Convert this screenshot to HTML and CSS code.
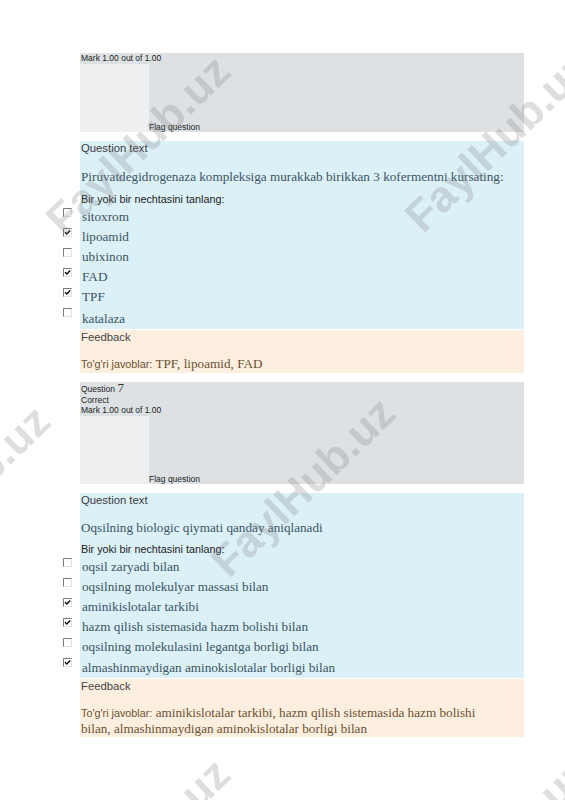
FILE: index.html
```html
<!DOCTYPE html>
<html lang="uz">
<head>
<meta charset="utf-8">
<title>Quiz review</title>
<link rel="stylesheet" href="styles.css">
</head>
<body>
<div class="page">
  <div class="info">
    <div class="info-line">Mark 1.00 out of 1.00</div>
    <div class="flag-row"><div class="flag-col"></div><div class="flag-text">Flag question</div></div>
  </div>

  <div class="qtext">
    <div class="label">Question text</div>
    <p class="question">Piruvatdegidrogenaza kompleksiga murakkab birikkan 3 kofermentni kursating:</p>
    <div class="prompt">Bir yoki bir nechtasini tanlang:</div>
    <div class="options">
      <div class="option"><span class="cb"><svg width="9" height="9" viewBox="0 0 9 9"><rect x="0.5" y="0.5" width="8" height="8" fill="#fff" stroke="#e2e2e2"/><path d="M0.5 8.5V0.5H8.5" fill="none" stroke="#7a7a7a"/></svg></span><span class="opt-label">sitoxrom</span></div>
      <div class="option"><span class="cb"><svg width="9" height="9" viewBox="0 0 9 9"><rect x="0.5" y="0.5" width="8" height="8" fill="#fff" stroke="#e2e2e2"/><path d="M0.5 8.5V0.5H8.5" fill="none" stroke="#7a7a7a"/><path d="M2 4.2l1.8 1.8 3.4-3.6" fill="none" stroke="#111" stroke-width="1.5"/></svg></span><span class="opt-label">lipoamid</span></div>
      <div class="option"><span class="cb"><svg width="9" height="9" viewBox="0 0 9 9"><rect x="0.5" y="0.5" width="8" height="8" fill="#fff" stroke="#e2e2e2"/><path d="M0.5 8.5V0.5H8.5" fill="none" stroke="#7a7a7a"/></svg></span><span class="opt-label">ubixinon</span></div>
      <div class="option"><span class="cb"><svg width="9" height="9" viewBox="0 0 9 9"><rect x="0.5" y="0.5" width="8" height="8" fill="#fff" stroke="#e2e2e2"/><path d="M0.5 8.5V0.5H8.5" fill="none" stroke="#7a7a7a"/><path d="M2 4.2l1.8 1.8 3.4-3.6" fill="none" stroke="#111" stroke-width="1.5"/></svg></span><span class="opt-label">FAD</span></div>
      <div class="option"><span class="cb"><svg width="9" height="9" viewBox="0 0 9 9"><rect x="0.5" y="0.5" width="8" height="8" fill="#fff" stroke="#e2e2e2"/><path d="M0.5 8.5V0.5H8.5" fill="none" stroke="#7a7a7a"/><path d="M2 4.2l1.8 1.8 3.4-3.6" fill="none" stroke="#111" stroke-width="1.5"/></svg></span><span class="opt-label">TPF</span></div>
      <div class="option option-last"><span class="cb"><svg width="9" height="9" viewBox="0 0 9 9"><rect x="0.5" y="0.5" width="8" height="8" fill="#fff" stroke="#e2e2e2"/><path d="M0.5 8.5V0.5H8.5" fill="none" stroke="#7a7a7a"/></svg></span><span class="opt-label">katalaza</span></div>
    </div>
  </div>

  <div class="feedback">
    <div class="label">Feedback</div>
    <p class="answer"><span class="answer-lead">To'g'ri javoblar:</span> TPF, lipoamid, FAD</p>
  </div>

  <div class="info info-second">
    <div class="info-line info-qno">Question <span class="qno-num">7</span></div>
    <div class="info-line">Correct</div>
    <div class="info-line">Mark 1.00 out of 1.00</div>
    <div class="flag-row"><div class="flag-col"></div><div class="flag-text">Flag question</div></div>
  </div>

  <div class="qtext qtext-tight">
    <div class="label">Question text</div>
    <p class="question">Oqsilning biologic qiymati qanday aniqlanadi</p>
    <div class="prompt">Bir yoki bir nechtasini tanlang:</div>
    <div class="options">
      <div class="option"><span class="cb"><svg width="9" height="9" viewBox="0 0 9 9"><rect x="0.5" y="0.5" width="8" height="8" fill="#fff" stroke="#e2e2e2"/><path d="M0.5 8.5V0.5H8.5" fill="none" stroke="#7a7a7a"/></svg></span><span class="opt-label">oqsil zaryadi bilan</span></div>
      <div class="option"><span class="cb"><svg width="9" height="9" viewBox="0 0 9 9"><rect x="0.5" y="0.5" width="8" height="8" fill="#fff" stroke="#e2e2e2"/><path d="M0.5 8.5V0.5H8.5" fill="none" stroke="#7a7a7a"/></svg></span><span class="opt-label">oqsilning molekulyar massasi bilan</span></div>
      <div class="option"><span class="cb"><svg width="9" height="9" viewBox="0 0 9 9"><rect x="0.5" y="0.5" width="8" height="8" fill="#fff" stroke="#e2e2e2"/><path d="M0.5 8.5V0.5H8.5" fill="none" stroke="#7a7a7a"/><path d="M2 4.2l1.8 1.8 3.4-3.6" fill="none" stroke="#111" stroke-width="1.5"/></svg></span><span class="opt-label">aminikislotalar tarkibi</span></div>
      <div class="option"><span class="cb"><svg width="9" height="9" viewBox="0 0 9 9"><rect x="0.5" y="0.5" width="8" height="8" fill="#fff" stroke="#e2e2e2"/><path d="M0.5 8.5V0.5H8.5" fill="none" stroke="#7a7a7a"/><path d="M2 4.2l1.8 1.8 3.4-3.6" fill="none" stroke="#111" stroke-width="1.5"/></svg></span><span class="opt-label">hazm qilish sistemasida hazm bolishi bilan</span></div>
      <div class="option"><span class="cb"><svg width="9" height="9" viewBox="0 0 9 9"><rect x="0.5" y="0.5" width="8" height="8" fill="#fff" stroke="#e2e2e2"/><path d="M0.5 8.5V0.5H8.5" fill="none" stroke="#7a7a7a"/></svg></span><span class="opt-label">oqsilning molekulasini legantga borligi bilan</span></div>
      <div class="option option-last"><span class="cb"><svg width="9" height="9" viewBox="0 0 9 9"><rect x="0.5" y="0.5" width="8" height="8" fill="#fff" stroke="#e2e2e2"/><path d="M0.5 8.5V0.5H8.5" fill="none" stroke="#7a7a7a"/><path d="M2 4.2l1.8 1.8 3.4-3.6" fill="none" stroke="#111" stroke-width="1.5"/></svg></span><span class="opt-label">almashinmaydigan aminokislotalar borligi bilan</span></div>
    </div>
  </div>

  <div class="feedback">
    <div class="label">Feedback</div>
    <p class="answer answer-wrap"><span class="answer-lead">To'g'ri javoblar:</span> aminikislotalar tarkibi, hazm qilish sistemasida hazm bolishi bilan, almashinmaydigan aminokislotalar borligi bilan</p>
  </div>
</div>

<div class="watermarks" aria-hidden="true">
  <span class="wm wm-a1">FaylHub.uz</span>
  <span class="wm wm-a2">FaylHub.uz</span>
  <span class="wm wm-b1">FaylHub.uz</span>
  <span class="wm wm-b2">FaylHub.uz</span>
  <span class="wm wm-c1">FaylHub.uz</span>
  <span class="wm wm-c2">FaylHub.uz</span>
</div>
</body>
</html>
```

FILE: styles.css
```css
html, body {
  margin: 0;
  padding: 0;
  background: #ffffff;
}

body {
  font-family: "Liberation Sans", Arial, sans-serif;
  color: #222;
}

.page {
  width: 444px;
  margin-left: 80px;
  padding-top: 53px;
}

/* grey info block */
.info {
  background: #dee1e4;
}

.info-second {
  margin-top: 9px;
}

.info-line {
  font-size: 8.5px;
  line-height: 10.5px;
  padding-left: 1px;
  color: #222;
}

.info-qno {
  line-height: 12px;
}

.qno-num {
  font-family: "Liberation Serif", "Times New Roman", serif;
  font-size: 13px;
  color: #333;
}

.flag-row {
  display: flex;
  height: 68px;
}

.flag-col {
  width: 69px;
  background: #eeeff0;
}

.flag-text {
  align-self: flex-end;
  font-size: 8.5px;
  line-height: 9px;
  color: #222;
}

/* question text block */
.qtext {
  background: #dcf0f8;
  margin-top: 9px;
}

.label {
  font-size: 11.3px;
  line-height: 15px;
  padding-left: 1px;
  color: #3a3a3a;
}

.question {
  margin: 11px 0 0;
  padding-left: 1px;
  font-family: "Liberation Serif", "Times New Roman", serif;
  font-size: 13.2px;
  line-height: 20px;
  color: #3a5462;
}

.qtext-tight .question {
  margin-top: 10px;
}

.qtext-tight .prompt {
  margin-top: 3px;
}

.prompt {
  margin-top: 4px;
  padding-left: 1px;
  font-size: 10.8px;
  line-height: 16px;
  color: #222;
}

.options {
  margin-left: -20px;
}

.option {
  display: flex;
  height: 20px;
}

.option-last {
  height: 22px;
}

.qtext-tight .option-last {
  height: 21px;
}

.cb {
  width: 20px;
  height: 16px;
  flex: none;
  box-sizing: border-box;
  padding: 1px 0 0 3px;
  background: #ffffff;
}

.cb svg {
  display: block;
}

.opt-label {
  padding-left: 2px;
  font-family: "Liberation Serif", "Times New Roman", serif;
  font-size: 13.2px;
  line-height: 20px;
  color: #3a5462;
}

.option-last .opt-label {
  padding-top: 2px;
}

.qtext-tight .option-last .opt-label {
  padding-top: 1px;
}

/* feedback block */
.feedback {
  background: #fdefdf;
  margin-top: 1px;
  padding-bottom: 1px;
}

.feedback .label {
  color: #444;
}

.answer {
  margin: 11px 0 0;
  padding-left: 1px;
  font-family: "Liberation Serif", "Times New Roman", serif;
  font-size: 13.2px;
  line-height: 15px;
  color: #6b5030;
}

.answer-wrap {
  max-width: 410px;
}

.answer-lead {
  font-family: "Liberation Sans", Arial, sans-serif;
  font-size: 10.8px;
}

/* watermark overlay */
.watermarks {
  position: fixed;
  top: 0;
  left: 0;
  width: 565px;
  height: 800px;
  overflow: hidden;
  pointer-events: none;
}

.wm {
  position: absolute;
  font-family: "Liberation Sans", Arial, sans-serif;
  font-weight: bold;
  font-size: 44px;
  line-height: 1;
  white-space: nowrap;
  color: rgba(128, 128, 128, 0.26);
  transform: translate(-50%, -50%) rotate(-44deg);
}

.wm-a1 { left: 138px; top: 145px; }
.wm-a2 { left: 497px; top: 142px; }
.wm-b1 { left: -42px; top: 495px; }
.wm-b2 { left: 303px; top: 487px; }
.wm-c1 { left: 138px; top: 848px; }
.wm-c2 { left: 497px; top: 848px; }
```
